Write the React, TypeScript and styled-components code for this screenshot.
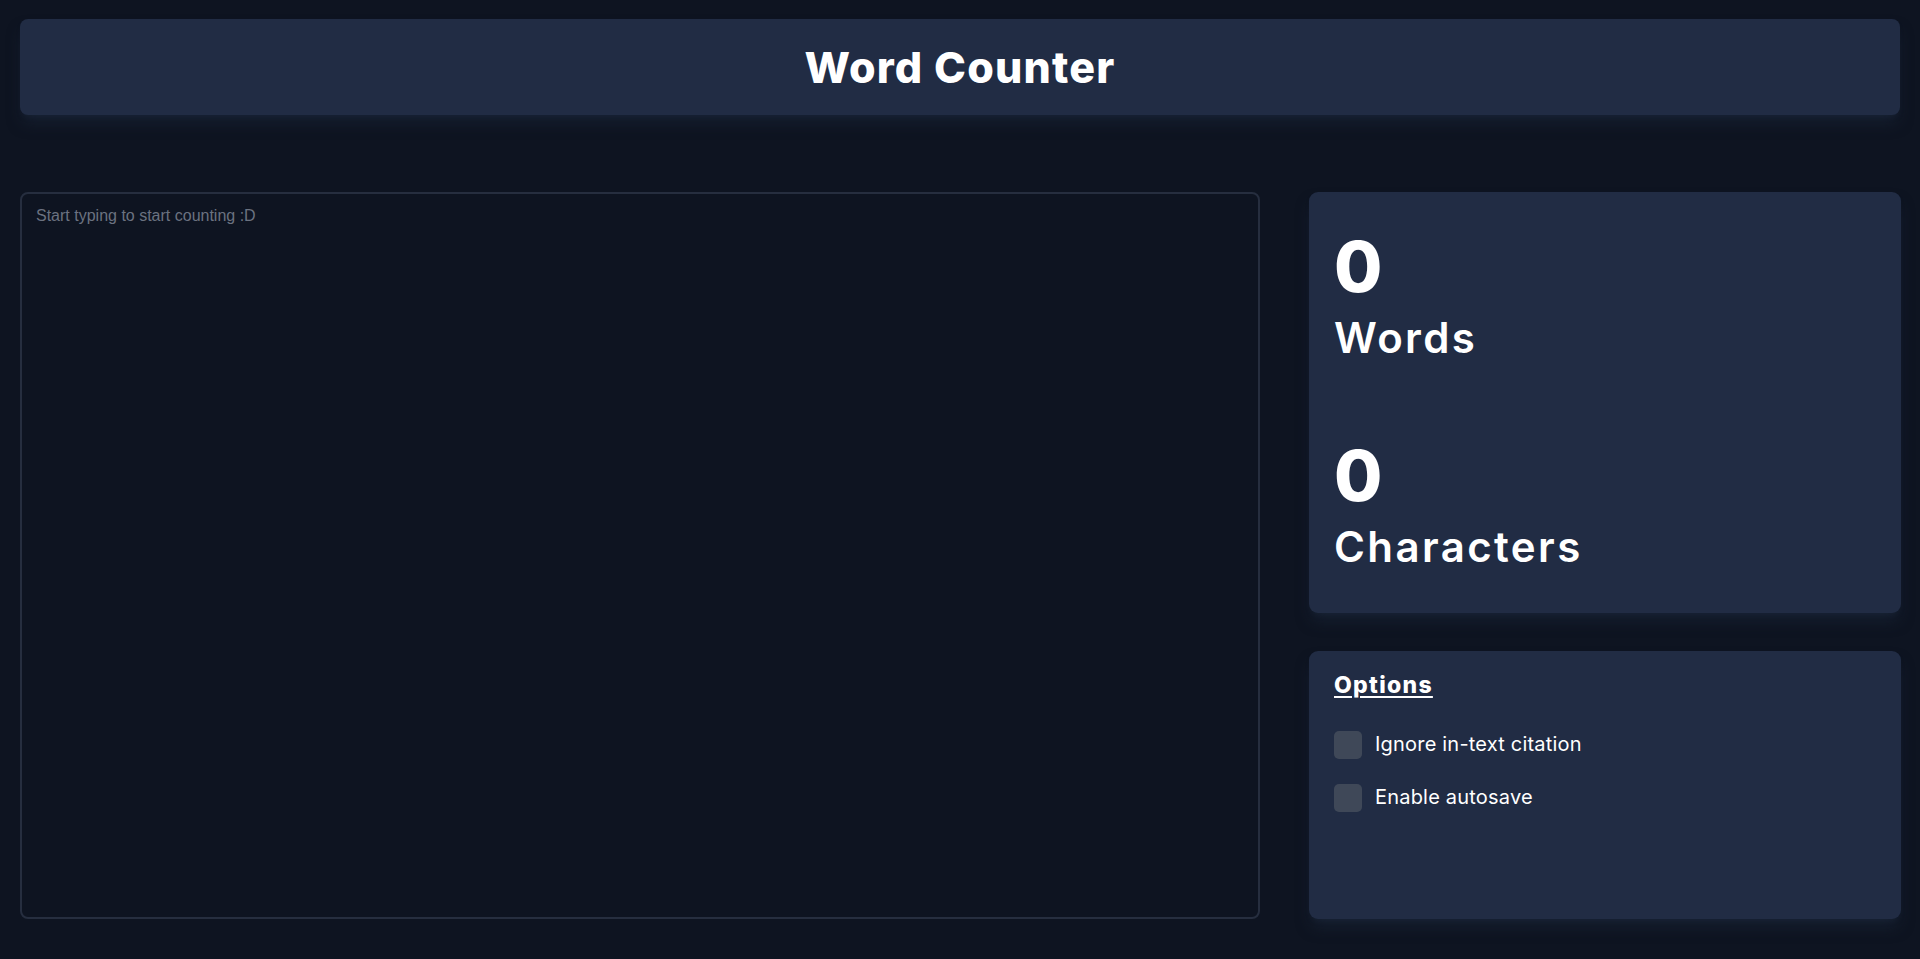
import React, { useState } from "react";
import styled, { createGlobalStyle } from "styled-components";

const GlobalStyle = createGlobalStyle`
  html, body {
    margin: 0;
    padding: 0;
    background: #0e1421;
  }
  body {
    font-family: Inter, "Noto Sans", sans-serif;
    color: #ffffff;
  }
  * { box-sizing: border-box; }
`;

const Page = styled.div`
  min-height: 959px;
  padding: 19px 19px 0 20px;
  display: flex;
  flex-direction: column;
  gap: 77px;
`;

const Header = styled.header`
  height: 96px;
  width: 1880px;
  background: #212c44;
  border-radius: 8px;
  display: flex;
  align-items: center;
  justify-content: center;
  box-shadow: 0 10px 15px -3px rgba(30, 41, 62, 0.55), 0 4px 6px -4px rgba(30, 41, 62, 0.55);
`;

const Title = styled.h1`
  margin: 0;
  font-family: Inter, sans-serif;
  font-weight: 800;
  font-size: 43px;
  line-height: 48px;
  letter-spacing: 1.2px;
  color: #ffffff;
`;

const Main = styled.main`
  display: grid;
  grid-template-columns: 1240px 592px;
  column-gap: 49px;
  align-items: stretch;
`;

const TextArea = styled.textarea`
  height: 727px;
  width: 100%;
  resize: none;
  background: #0e1421;
  border: 2px solid #262e3f;
  border-radius: 8px;
  padding: 12px 14px;
  font-family: "Liberation Sans", Arial, sans-serif;
  font-size: 16px;
  line-height: 20px;
  color: #e5e7eb;
  outline: none;
  &::placeholder {
    color: #6b7280;
  }
`;

const SideColumn = styled.aside`
  display: flex;
  flex-direction: column;
  gap: 38px;
`;

const Card = styled.section<{ $grow?: boolean }>`
  background: #212c44;
  border-radius: 9px;
  box-shadow: 0 10px 15px -3px rgba(30, 41, 62, 0.55), 0 4px 6px -4px rgba(30, 41, 62, 0.55);
  flex: ${(p) => (p.$grow ? "1 1 auto" : "0 0 auto")};
`;

const StatsCard = styled(Card)`
  padding: 40px 25px 42px;
  display: flex;
  flex-direction: column;
  gap: 79px;
`;

const Stat = styled.div`
  display: flex;
  flex-direction: column;
  gap: 12px;
`;

const StatNumber = styled.div`
  font-family: Inter, sans-serif;
  font-weight: 800;
  font-size: 70px;
  line-height: 70px;
  color: #ffffff;
`;

const StatLabel = styled.div`
  font-family: Inter, sans-serif;
  font-weight: 600;
  font-size: 42px;
  line-height: 48px;
  letter-spacing: 2.4px;
  color: #ffffff;
`;

const OptionsCard = styled(Card)`
  padding: 18px 25px;
  display: flex;
  flex-direction: column;
`;

const OptionsTitle = styled.h2`
  margin: 0 0 30px;
  font-family: Inter, sans-serif;
  font-weight: 800;
  font-size: 23px;
  line-height: 32px;
  letter-spacing: 1.3px;
  text-decoration: underline;
  text-decoration-thickness: 2px;
  text-underline-offset: 3px;
  color: #ffffff;
`;

const OptionList = styled.div`
  display: flex;
  flex-direction: column;
  gap: 25px;
`;

const OptionRow = styled.label`
  display: flex;
  align-items: center;
  gap: 13px;
  cursor: pointer;
`;

const Box = styled.span<{ $checked: boolean }>`
  width: 28px;
  height: 28px;
  border-radius: 5px;
  background: ${(p) => (p.$checked ? "#3b82f6" : "#3f4858")};
  flex: none;
`;

const HiddenInput = styled.input`
  display: none;
`;

const OptionText = styled.span`
  font-family: Inter, sans-serif;
  font-weight: 400;
  font-size: 20px;
  line-height: 28px;
  letter-spacing: 0.2px;
  color: #ffffff;
  margin-top: -2px;
`;

function Option({ label }: { label: string }) {
  const [checked, setChecked] = useState(false);
  return (
    <OptionRow>
      <HiddenInput type="checkbox" checked={checked} onChange={() => setChecked(!checked)} />
      <Box $checked={checked} />
      <OptionText>{label}</OptionText>
    </OptionRow>
  );
}

export default function App() {
  const [text, setText] = useState("");
  const words = text.trim() ? text.trim().split(/\s+/).length : 0;
  const chars = text.length;
  return (
    <>
      <GlobalStyle />
      <Page>
        <Header>
          <Title>Word Counter</Title>
        </Header>
        <Main>
          <TextArea
            placeholder="Start typing to start counting :D"
            value={text}
            onChange={(e) => setText(e.target.value)}
          />
          <SideColumn>
            <StatsCard>
              <Stat>
                <StatNumber>{words}</StatNumber>
                <StatLabel>Words</StatLabel>
              </Stat>
              <Stat>
                <StatNumber>{chars}</StatNumber>
                <StatLabel>Characters</StatLabel>
              </Stat>
            </StatsCard>
            <OptionsCard $grow>
              <OptionsTitle>Options</OptionsTitle>
              <OptionList>
                <Option label="Ignore in-text citation" />
                <Option label="Enable autosave" />
              </OptionList>
            </OptionsCard>
          </SideColumn>
        </Main>
      </Page>
    </>
  );
}
